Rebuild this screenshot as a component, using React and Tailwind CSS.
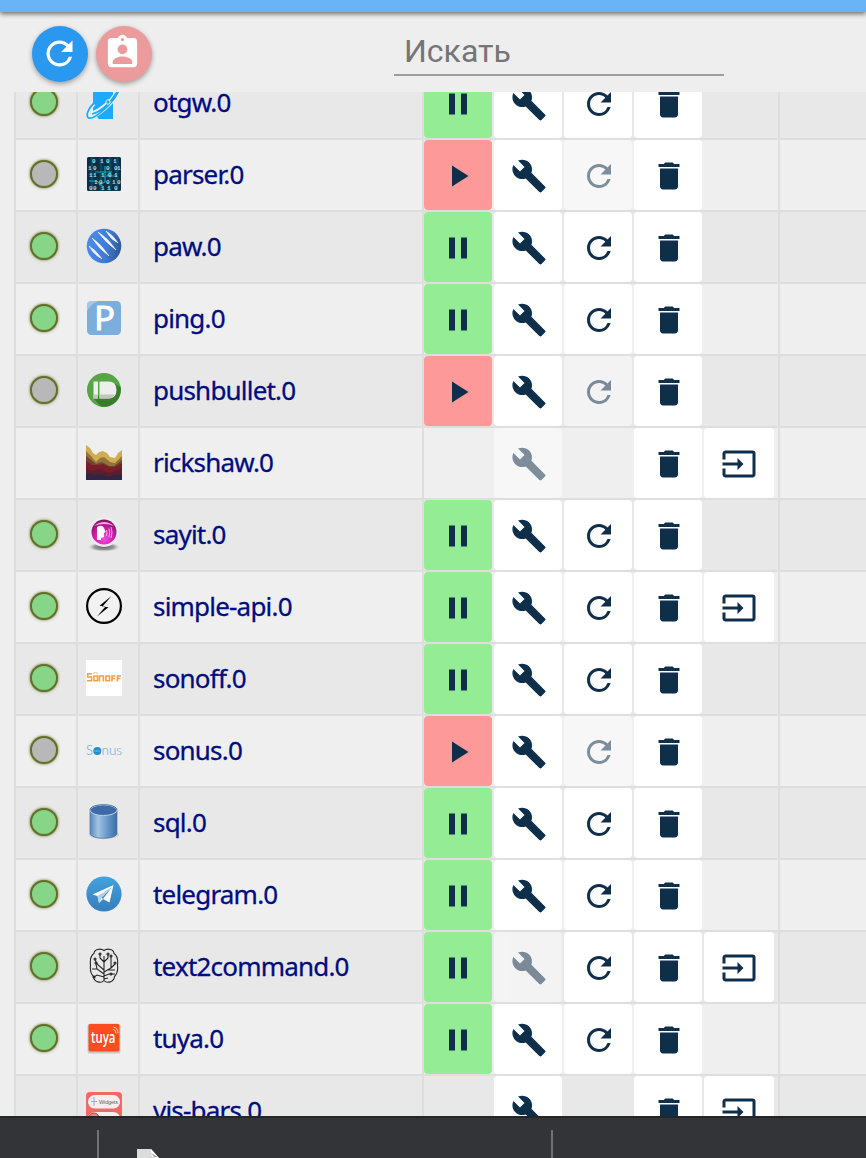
import React from 'react';
import { MdPause, MdPlayArrow, MdBuild, MdRefresh, MdDelete, MdInput, MdAssignmentInd } from 'react-icons/md';

const iconClasses = "block w-9 h-9 shrink-0";

const OtgwIcon = () => (
  <svg viewBox="0 0 36 36" className={iconClasses}>
    <path d="M7 0h20v35H13L7 29z" fill="#1eaaf8" />
    <path d="M8 20C3 25 1 30 2 33c4 4 27-14 32-28M5 29c8-1 22-13 27-23" fill="none" stroke="#e9f4fb" strokeWidth="3.500" />
    <path d="M8 19C3 24 -1 31 2.500 34c5 2 25-14 31-29M6 30c8-2 17-9 25-22" fill="none" stroke="#1eaaf8" strokeWidth="1.800" />
    <circle cx="22" cy="18" r="2.200" fill="#1eaaf8" stroke="#e9f4fb" />
  </svg>
);

const ParserIcon = () => (
  <svg viewBox="0 0 36 36" className={iconClasses}>
    <rect x="1" y="1" width="34" height="34" rx="1.500" fill="#0b2f45" />
    <path d="M6 1v34M15 1v34M24 1v34M31 1v34" stroke="#0b5270" strokeWidth="3" opacity=".7" />
    <path d="M9 16h16l-4 4h10M19 10v16l-6 3M3 25h8l5 5" fill="none" stroke="#08a8b5" strokeWidth="1.200" />
    <g fill="#b5dce0" fontFamily="Liberation Mono, monospace" fontWeight="bold" fontSize="6">
      <text x="6 14 20 27" y="6.500">0101</text>
      <text x="2 7 20 28 31" y="13.500">10001</text>
      <text x="3 7 15 22 28" y="20.500">11101</text>
      <text x="8 13 20 26 31" y="27.500">10010</text>
      <text x="3 7 15 21 28" y="34">00110</text>
    </g>
  </svg>
);

const PawIcon = () => (
  <svg viewBox="0 0 36 36" className={iconClasses}>
    <defs>
      <linearGradient id="paw" x1="0" x2="1" y1="0.4" y2="0.6">
        <stop offset="0" stopColor="#4a8df0" />
        <stop offset=".6" stopColor="#3f7bd5" />
        <stop offset="1" stopColor="#2f5698" />
      </linearGradient>
    </defs>
    <circle cx="18" cy="18" r="17.300" fill="url(#paw)" />
    <g fill="#1d4488" transform="translate(1 1.300)">
      <path d="M3 18q7 4 13 13-8-4-13-13zM6 10q9 6 17 18Q13 21 6 10zM12 4q10 6 18 18Q20 15 12 4zM20 3q7 4 12 12-7-3-12-12z" />
    </g>
    <path d="M3 18q7 4 13 13-8-4-13-13zM6 10q9 6 17 18Q13 21 6 10zM12 4q10 6 18 18Q20 15 12 4zM20 3q7 4 12 12-7-3-12-12z" fill="#f4f5f7" stroke="#f4f5f7" strokeWidth=".6" />
  </svg>
);

const PingIcon = () => (
  <svg viewBox="0 0 36 36" className={iconClasses}>
    <rect x="1" y="1" width="34" height="34" rx="4.500" fill="#7baedb" />
    <path d="M1 11V5.500Q1 1 5.500 1H12Q5 4 1 11z" fill="#a3c9e8" />
    <text x="8" y="30" fill="#fff" stroke="#fff" strokeWidth=".8" fontFamily="Noto Sans, sans-serif" fontSize="33" textLength="21" lengthAdjust="spacingAndGlyphs">P</text>
  </svg>
);

const PushbulletIcon = () => (
  <svg viewBox="0 0 36 36" className={iconClasses}>
    <circle cx="18" cy="18" r="17" fill="#56a546" />
    <path d="M8 27l7 7.600A17 17 0 0034.500 15L29 12z" fill="#397d2b" />
    <path d="M7.500 9.500h4.500v17H7.500zM13.500 9.500h9q8 0 8 8.500t-8 8.500h-9z" fill="#eee" />
    <path d="M7.500 22.500h4.500v4H7.500zM13.500 22.500h15.500q-2 4-6.500 4h-9z" fill="#c2c6c0" />
  </svg>
);

const RickshawIcon = () => (
  <svg viewBox="0 0 36 36" className={iconClasses}>
    <path d="M0 1l4 3 3 5 3 2 3-3 4-1 4 2 3 4 5 1 3-5 4-3v30H0z" fill="#cfae52" />
    <path d="M0 7l5 5 5 6 4-4 4-1 6 5 5 1 7-7v24H0z" fill="#93733c" />
    <path d="M0 12l5 4 5 4 6-2 7 4 5 0 8-6v20H0z" fill="#714331" />
    <path d="M0 17l6 4 6 0 5-1 7 3 5 0 7-4v17H0z" fill="#7b1c28" />
    <path d="M0 24l6 3 8-2 9 4 6-2 7-3v12H0z" fill="#57202f" />
    <path d="M0 29l7 2 8-1 7 3 7-2 7 0v5H0z" fill="#302544" />
  </svg>
);

const SayitIcon = () => (
  <svg viewBox="0 0 36 36" className={iconClasses}>
    <defs>
      <radialGradient id="sayit" cx=".5" cy=".75" r=".7">
        <stop offset="0" stopColor="#f94de9" />
        <stop offset=".5" stopColor="#d321ae" />
        <stop offset="1" stopColor="#8c1168" />
      </radialGradient>
      <radialGradient id="sayitShadow">
        <stop offset="0" stopColor="#666" />
        <stop offset=".6" stopColor="#999" />
        <stop offset="1" stopColor="#e8e8e8" stopOpacity="0" />
      </radialGradient>
    </defs>
    <ellipse cx="18" cy="31" rx="17" ry="5" fill="url(#sayitShadow)" />
    <circle cx="18" cy="16" r="15" fill="#ececee" />
    <circle cx="18" cy="16" r="12.500" fill="url(#sayit)" />
    <path d="M8 10q10-8 20 0-10-4-20 0z" fill="#f6a7de" />
    <path d="M11 11q5-3 7 1l1.500 4-1.500 1v4l-3 1v2h-4z" fill="#fff" />
    <path d="M20.500 14q1 3 0 6M23 12.500q1.500 4 0 8.500M25 11q2 5 0 11" fill="none" stroke="#f7b4ec" strokeWidth=".9" />
  </svg>
);

const SimpleApiIcon = () => (
  <svg viewBox="0 0 36 36" className={iconClasses}>
    <circle cx="18" cy="18" r="16.900" fill="#f2f2f2" stroke="#000" strokeWidth="2.200" />
    <path d="M25.500 8L13.500 17.700l6 .8L11 28.500l11.500-9.300-6-.8z" fill="#000" />
  </svg>
);

const SonoffIcon = () => (
  <svg viewBox="0 0 36 36" className={iconClasses}>
    <path fill="#fff" d="M0 0h36v36H0z" />
    <g fill="none" stroke="#f0a04b" strokeWidth="1.600">
      <path d="M6 13.700H1.700v3.300H5.500v3.800H1M8 16h3.500v4.800H8zM13.500 21.500V16h3.800v5.500M20 16h3.500v4.800H20zM26 21.500V16h3.500M26 18.500h3M31.500 21.500V16H35M31.500 18.500h3" />
      <path d="M7 13.500q2.500-2 5 0" strokeWidth=".7" />
    </g>
  </svg>
);

const SonusIcon = () => (
  <svg viewBox="0 0 36 36" className={iconClasses}>
    <g fill="#5aa9d0" fontFamily="Lato, sans-serif" fontWeight="300" fontSize="13.500">
      <text x="0" y="23" textLength="7" lengthAdjust="spacingAndGlyphs">S</text>
      <text x="15.500" y="23" textLength="20.500" lengthAdjust="spacingAndGlyphs">nus</text>
    </g>
    <circle cx="11.300" cy="19" r="4" fill="#258fce" />
    <path d="M8.500 19h5.500" stroke="#8bd0f2" strokeDasharray="1 .6" />
  </svg>
);

const SqlIcon = () => (
  <svg viewBox="0 0 36 36" className={iconClasses}>
    <defs>
      <linearGradient id="sql">
        <stop offset="0" stopColor="#5987bc" />
        <stop offset=".3" stopColor="#a4c3e3" />
        <stop offset=".65" stopColor="#6796c8" />
        <stop offset="1" stopColor="#3d6da8" />
      </linearGradient>
    </defs>
    <ellipse cx="18" cy="30.500" rx="15" ry="4.500" fill="#ccc" />
    <path d="M4 6v23c0 7 27 7 27 0V6z" fill="url(#sql)" stroke="#47709f" strokeWidth=".7" />
    <ellipse cx="17.500" cy="6.200" rx="13.500" ry="5.300" fill="#3e6ba8" stroke="#bdd3ea" strokeWidth="1" />
    <path d="M4 6c0-7 27-7 27 0" fill="none" stroke="#466d9c" />
  </svg>
);

const TelegramIcon = () => (
  <svg viewBox="0 0 36 36" className={iconClasses}>
    <defs>
      <linearGradient id="telegram" x2="0" y2="1">
        <stop offset="0" stopColor="#42a3de" />
        <stop offset="1" stopColor="#377dbc" />
      </linearGradient>
    </defs>
    <circle cx="18" cy="18" r="17.600" fill="url(#telegram)" />
    <path d="M6.500 18.500L27.500 9l-4 17.500-6.500-3.500-4 4-1.500-7z" fill="#fff" />
    <path d="M11.500 20L25 11.500 15.500 22l-2.500 5z" fill="#b3d0e8" />
    <path d="M15.500 22L26 11l-9 12z" fill="#3d8dca" />
  </svg>
);

const BrainIcon = () => (
  <svg viewBox="0 0 36 36" className={iconClasses}>
    <g fill="none" stroke="#252525" strokeWidth="1.100">
      <path d="M18 2.500C14-.5 8 2 8 5.500 4 8 4 13 4.500 17.500c-.5 4 0 8 3 11C8 34 15 36 18 32.500 21 36 28 34 28.500 28.500c3-3 3.500-7 3-11C32 13 32 8 28 5.500 28 2 22-.5 18 2.500z" />
      <path d="M18 8v24M18 14l-4-4V7M18 14l4-4V7M18 26l-7-5-1-5M18 22l-6-5-3-5M11 21H6M18 29l-7-2-3 2M18 24l7-4V8M25 20l4-4M22 22h7M18 28l5-2h6M18 31l4-1" />
      <circle cx="14" cy="6" r="1" /><circle cx="22" cy="6" r="1" /><circle cx="9" cy="11" r="1" />
      <circle cx="10" cy="15" r="1" /><circle cx="25" cy="8" r="1" /><circle cx="29" cy="15" r="1" />
      <circle cx="8" cy="29" r="1" /><circle cx="25" cy="26" r="1" />
    </g>
  </svg>
);

const TuyaIcon = () => (
  <svg viewBox="0 0 36 36" className={iconClasses}>
    <rect x="1.500" y="3.500" width="33" height="30" rx="2.500" fill="#c8c8c8" />
    <rect x="2.500" y="4" width="31" height="27.500" rx="2" fill="#fb4d1f" />
    <text x="5" y="22.500" fill="#fff" fontFamily="Open Sans, sans-serif" fontWeight="600" fontSize="16" textLength="24.500" lengthAdjust="spacingAndGlyphs">tuya</text>
    <path d="M27 9.500q3 0 3 4M27.500 7q4.500 1 4.500 6" fill="none" stroke="#ffd9cc" strokeWidth="1" />
  </svg>
);

const VisBarsIcon = () => (
  <svg viewBox="0 0 36 36" className={iconClasses}>
    <rect width="36" height="36" rx="4" fill="#ef6a64" />
    <rect x="2" y="3" width="32" height="13.500" rx="6.500" fill="#f4eeee" />
    <path d="M8 5v9M5 9.500h6" stroke="#8eb2d8" />
    <text x="13" y="11.800" fill="#666" fontFamily="Liberation Sans, sans-serif" fontSize="5.500" textLength="19">Widgets</text>
    <rect x="2" y="20" width="32" height="13.500" rx="6.500" fill="#f4eeee" />
    <circle cx="8" cy="26" r="5" fill="#d8908c" stroke="#b23b38" />
  </svg>
);

const instances = [
  { name: 'otgw.0', icon: OtgwIcon, state: 'on' },
  { name: 'parser.0', icon: ParserIcon, state: 'off' },
  { name: 'paw.0', icon: PawIcon, state: 'on' },
  { name: 'ping.0', icon: PingIcon, state: 'on' },
  { name: 'pushbullet.0', icon: PushbulletIcon, state: 'off' },
  { name: 'rickshaw.0', icon: RickshawIcon, state: null, noConfig: true, link: true },
  { name: 'sayit.0', icon: SayitIcon, state: 'on' },
  { name: 'simple-api.0', icon: SimpleApiIcon, state: 'on', link: true },
  { name: 'sonoff.0', icon: SonoffIcon, state: 'on' },
  { name: 'sonus.0', icon: SonusIcon, state: 'off' },
  { name: 'sql.0', icon: SqlIcon, state: 'on' },
  { name: 'telegram.0', icon: TelegramIcon, state: 'on' },
  { name: 'text2command.0', icon: BrainIcon, state: 'on', noConfig: true, link: true },
  { name: 'tuya.0', icon: TuyaIcon, state: 'on' },
  { name: 'vis-bars.0', icon: VisBarsIcon, state: null, link: true },
];

const ActionButton = ({ icon: Icon, color = 'bg-white pl-px', disabled, wide }) => (
  <button
    disabled={disabled}
    className={`flex items-center justify-center h-[70px] pt-0.5 rounded text-[#0f2e4a] ${wide ? 'w-[70px]' : 'w-[68px]'} ${color} ${disabled ? 'opacity-50' : ''}`}
  >
    <Icon className="w-9 h-9" />
  </button>
);

const InstanceRow = ({ item }) => {
  const Icon = item.icon;
  const running = item.state === 'on';

  return (
    <li className="flex h-[72px] border-b-2 border-[#dedede] odd:bg-[#e8e8e8] even:bg-[#efefef]">
      <div className="w-[62px] shrink-0 flex items-center pl-3.5 pb-0.5 border-r-2 border-[#dedede]">
        {item.state && (
          <span className={`w-7 h-7 rounded-full border-2 border-[#62702a] shadow-[0_0_3px_#6b7020] ${running ? 'bg-[#87d687]' : 'bg-[#b8b8b8]'}`} />
        )}
      </div>
      <div className="w-[62px] shrink-0 flex items-center pl-2 pb-0.5 border-r-2 border-[#dedede]">
        <Icon />
      </div>
      <div className="w-[284px] shrink-0 flex items-center pl-[13px] pb-0.5 border-r-2 border-[#dedede] font-['Noto_Sans',sans-serif] text-[26px] tracking-[-0.8px] text-[#000c80] [-webkit-text-stroke:0.3px_#000c80]">
        {item.name}
      </div>
      <div className="w-[356px] shrink-0 flex gap-0.5 border-r-2 border-[#dedede]">
        {item.state ? (
          <ActionButton icon={running ? MdPause : MdPlayArrow} color={running ? 'bg-[#94ec94]' : 'bg-[#fd9999]'} />
        ) : (
          <span className="w-[68px]" />
        )}
        <ActionButton icon={MdBuild} disabled={item.noConfig} />
        {item.state ? <ActionButton icon={MdRefresh} disabled={!running} /> : <span className="w-[68px]" />}
        <ActionButton icon={MdDelete} />
        {item.link && <ActionButton icon={MdInput} color="bg-white" wide />}
      </div>
    </li>
  );
};

const App = () => {
  return (
    <div className="w-full h-[1158px] flex flex-col overflow-hidden bg-[#eeeeee]">
      <div className="h-3 shrink-0 bg-[#69b4f4] shadow-[0_2px_5px_rgba(0,0,0,0.55)]" />

      <header className="h-20 shrink-0 flex items-start pl-8 pt-3.5">
        <button className="w-14 h-14 rounded-full bg-[#2b98f0] text-white flex items-center justify-center pb-0.5 pr-px shadow-[0_2px_5px_rgba(0,0,0,0.35)]">
          <MdRefresh className="w-[39px] h-[39px]" />
        </button>
        <button className="w-14 h-14 ml-2 rounded-full bg-[#ec9b9d] text-white flex items-center justify-center pb-1 pr-[3px] shadow-[0_2px_5px_rgba(0,0,0,0.35)]">
          <MdAssignmentInd className="w-[39px] h-[39px]" />
        </button>
        <input
          type="text"
          placeholder="Искать"
          className="w-[330px] h-[50px] ml-[242px] pl-2.5 pt-0.5 border-b-2 border-[#9e9e9e] bg-transparent outline-none font-['Roboto',sans-serif] text-[32px] placeholder:text-[#757575]"
        />
      </header>

      {/* list is scrolled, the first row is cut by the toolbar */}
      <main className="h-[1024px] shrink-0 overflow-hidden ml-3.5 border-l-2 border-[#dedede]">
        <ul className="-mt-6">
          {instances.map((item) => (
            <InstanceRow key={item.name} item={item} />
          ))}
        </ul>
      </main>

      <footer className="h-[42px] shrink-0 flex items-end bg-[#323437] border-t-2 border-[#252628]">
        <div className="w-[99px] h-7 border-r-2 border-[#707274]" />
        <div className="w-[454px] h-7 border-r-2 border-[#707274] flex items-end pl-[38px]">
          <svg viewBox="0 0 22 9" className="w-[22px] h-[9px]">
            <path d="M0 0h14l8 9H0z" fill="#dcdcdc" />
            <path d="M14 0v3l1 5 7 1z" fill="#fff" />
            <path d="M14 4l3 4h4z" fill="#aaa" />
          </svg>
        </div>
      </footer>
    </div>
  );
};

export default App;
